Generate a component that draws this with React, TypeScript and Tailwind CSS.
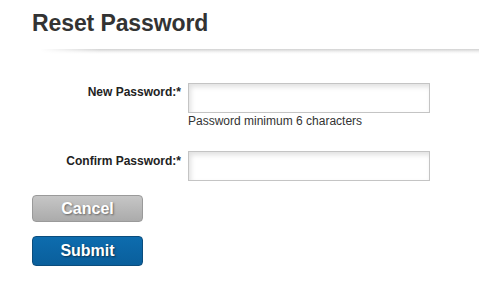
import React from "react";

export default function App() {
  return (
    <div className="w-[479px] h-[302px] bg-white text-[#333] [font-family:'Liberation_Sans',Arial,sans-serif]">
      <div className="pl-[32px] pt-[9px]">
        <h1 className="text-[23px] leading-[28px] font-bold text-[#333] tracking-[-0.1px]">Reset Password</h1>
      </div>
      <div className="ml-[40px] mt-[12px] h-[5px] bg-[linear-gradient(to_bottom,#d2d2d2,#f4f4f4_60%,#ffffff)] [mask-image:linear-gradient(to_right,transparent,black_60px)]" />
      <div className="mt-[29px] flex flex-col">
        <div className="flex items-start gap-[7px]">
          <label className="w-[181px] text-right text-[12px] leading-[16px] font-bold text-[#222] pt-[1px]">New Password:*</label>
          <div className="flex flex-col">
            <input type="password" className="w-[242px] h-[30px] border border-[#c4c4c4] bg-white shadow-[inset_2px_3px_5px_rgba(0,0,0,0.12)] outline-none" />
            <span className="text-[12px] leading-[15px] text-[#333] mt-[1px]">Password minimum 6 characters</span>
          </div>
        </div>
        <div className="flex items-start gap-[7px] mt-[22px]">
          <label className="w-[181px] text-right text-[12px] leading-[16px] font-bold text-[#222] pt-[2px]">Confirm Password:*</label>
          <input type="password" className="w-[242px] h-[30px] border border-[#c4c4c4] bg-white shadow-[inset_2px_3px_5px_rgba(0,0,0,0.12)] outline-none" />
        </div>
        <div className="pl-[32px] mt-[14px] flex flex-col gap-[14px]">
          <button className="w-[111px] h-[27px] rounded-[4px] border border-[#9a9a9a] bg-[linear-gradient(to_bottom,#c6c6c6,#ababab)] text-white text-[16px] font-bold leading-none [text-shadow:1px_1px_2px_rgba(0,0,0,0.45)]">Cancel</button>
          <button className="w-[111px] h-[30px] rounded-[4px] border border-[#0b4d7d] bg-[linear-gradient(to_bottom,#0d6cae,#0a5f9c)] text-white text-[16px] font-bold leading-none [text-shadow:1px_1px_2px_rgba(0,0,0,0.5)]">Submit</button>
        </div>
      </div>
    </div>
  );
}
